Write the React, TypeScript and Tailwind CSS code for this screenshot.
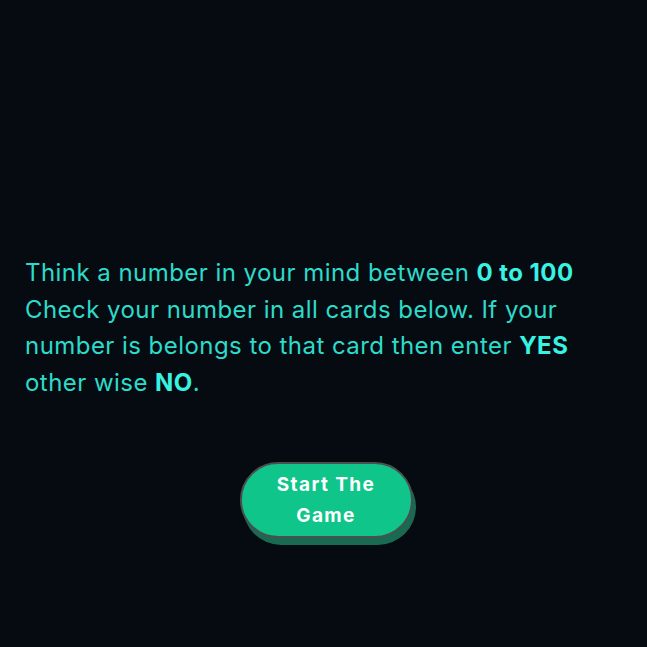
export default function App() {
  const bold = "font-bold text-[#38f2e2]";
  return (
    <div className="w-[647px] h-[647px] bg-[#050b11] overflow-hidden" style={{ fontFamily: '"Inter", "Open Sans", sans-serif' }}>
      <div className="pt-[255px] pl-[25px]">
        <p className="text-[24px] leading-[36.7px] text-[#2ddbcb] tracking-[0.45px] whitespace-nowrap">
          Think a number in your mind between <b className={bold}>0 to 100</b>
          <br />
          Check your number in all cards below. If your
          <br />
          number is belongs to that card then enter <b className={bold}>YES</b>
          <br />
          other wise <b className={bold}>NO</b>.
        </p>
      </div>
      <div className="flex justify-center pt-[60px] pl-[5px]">
        <button className="w-[173px] h-[76px] rounded-full bg-[#10c589] border-2 border-[#4a4f4f] shadow-[3px_7px_0_#1a6a52] text-white font-bold text-[19px] leading-[31px] tracking-[1.4px] flex items-center justify-center text-center px-8">
          Start The Game
        </button>
      </div>
    </div>
  );
}
